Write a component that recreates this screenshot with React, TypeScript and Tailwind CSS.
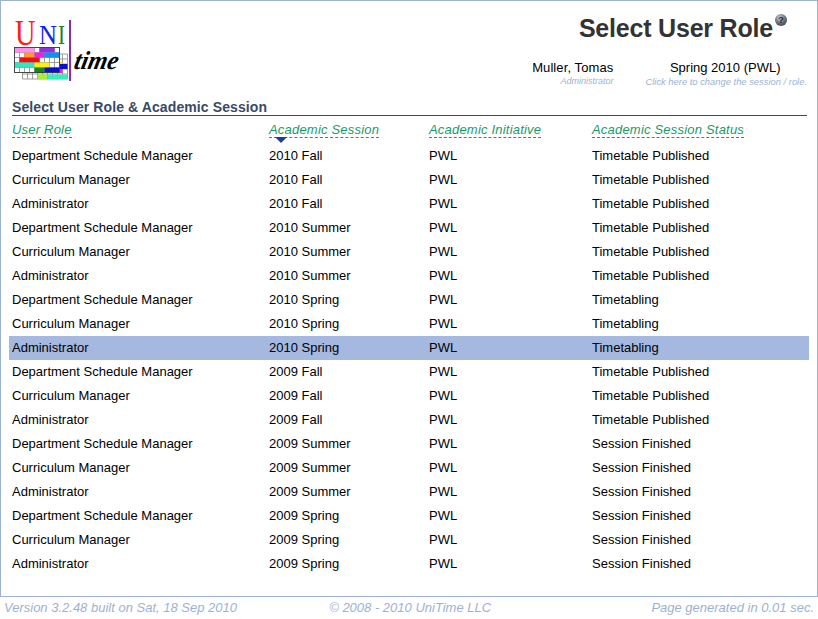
import React from 'react';

const sessions = [
  ['2010 Fall', 'Timetable Published'],
  ['2010 Summer', 'Timetable Published'],
  ['2010 Spring', 'Timetabling'],
  ['2009 Fall', 'Timetable Published'],
  ['2009 Summer', 'Session Finished'],
  ['2009 Spring', 'Session Finished'],
];

const roles = ['Department Schedule Manager', 'Curriculum Manager', 'Administrator'];

const rows = sessions.flatMap(([session, status]) =>
  roles.map((role) => ({ role, session, status }))
);

const gridLines = (x: number, y: number, cols: number, rowCount: number) => {
  const lines = [];
  for (let i = 0; i <= cols; i++) {
    lines.push(<line key={`c${i}`} x1={x + i * 5} y1={y} x2={x + i * 5} y2={y + rowCount * 5} stroke="#888" strokeWidth="0.8" />);
  }
  for (let i = 0; i <= rowCount; i++) {
    lines.push(<line key={`r${i}`} x1={x} y1={y + i * 5} x2={x + cols * 5} y2={y + i * 5} stroke="#888" strokeWidth="0.8" />);
  }
  return lines;
};

function Logo() {
  return (
    <svg width="112" height="74" viewBox="12 10 112 74" className="block">
      <text x="15" y="45" fontFamily="Liberation Serif" fontSize="35" fill="#ff2010" textLength="20.5" lengthAdjust="spacingAndGlyphs">U</text>
      <text x="39" y="44" fontFamily="Liberation Serif" fontSize="27" fill="#1020f0" textLength="18" lengthAdjust="spacingAndGlyphs">N</text>
      <text x="58" y="44" fontFamily="Liberation Serif" fontSize="27" fill="#208020" textLength="7" lengthAdjust="spacingAndGlyphs">I</text>
      <rect x="69" y="20" width="2" height="61" fill="#8a2fa8" />
      {/* back grid */}
      <rect x="22" y="54" width="46" height="25" fill="#fff" />
      {gridLines(22.5, 54, 9, 5)}
      <rect x="60" y="62" width="2.5" height="5" fill="#ffee00" />
      <rect x="60" y="64" width="7.5" height="5" fill="#0a10d0" />
      <rect x="60" y="69" width="2.5" height="4" fill="#ee22cc" />
      <rect x="37.5" y="74.5" width="9.5" height="4.5" fill="#a4f030" />
      <rect x="47.5" y="74.5" width="20" height="4.5" fill="#30f0c0" />
      {/* front grid */}
      <rect x="14" y="47" width="46" height="25.5" fill="#fff" />
      {gridLines(14.5, 47.5, 9, 5)}
      <rect x="14.5" y="47.5" width="20" height="5" fill="#ff90f0" />
      <rect x="39.5" y="47.5" width="15" height="5" fill="#9030e0" />
      <rect x="24.5" y="52.5" width="10" height="5" fill="#ff9a30" />
      <rect x="34.5" y="52.5" width="10" height="5" fill="#f020e0" />
      <rect x="44.5" y="52.5" width="15" height="5" fill="#1090f0" />
      <rect x="19.5" y="57.5" width="20" height="5" fill="#f01010" />
      <rect x="14.5" y="62.5" width="20" height="5" fill="#30e8c0" />
      <rect x="34.5" y="62.5" width="15" height="5" fill="#ffee10" />
      <rect x="34.5" y="67.5" width="10" height="5" fill="#108a10" />
      <rect x="44.5" y="67.5" width="15" height="5" fill="#0a10d0" />
      <rect x="14.5" y="47.5" width="45" height="25" fill="none" stroke="#333" strokeWidth="0.8" />
      {/* slanted to get closer to the script wordmark */}
      <text transform="translate(73 69) skewX(-12)" fontFamily="Liberation Serif" fontStyle="italic" fontWeight="bold" fontSize="26" fill="#000" textLength="44" lengthAdjust="spacingAndGlyphs">time</text>
    </svg>
  );
}

function HelpIcon() {
  return (
    <svg width="14" height="14" viewBox="0 0 14 14" className="absolute top-[3px] left-[245px]">
      <defs>
        <radialGradient id="help" cx="40%" cy="30%" r="75%">
          <stop offset="0%" stopColor="#c4cbd6" />
          <stop offset="60%" stopColor="#68727f" />
          <stop offset="100%" stopColor="#3a424c" />
        </radialGradient>
      </defs>
      <circle cx="7" cy="7" r="6" fill="url(#help)" />
      <text x="7" y="10" textAnchor="middle" fontFamily="Liberation Sans" fontWeight="bold" fontSize="9" fill="#20262e">?</text>
    </svg>
  );
}

export default function App() {
  return (
    <div className="w-[818px] h-[619px] bg-white font-['Liberation_Sans',Arial,sans-serif] text-[13px] text-black overflow-hidden">
      <div className="h-[597px] border border-[#9db2d3] pt-[9px] px-[8px]">
        {/* header */}
        <div className="flex justify-between h-[74px] pl-[3px]">
          <Logo />
          <div className="relative w-[280px] pr-[2px] pt-[7px]">
            <div className="text-right text-[25px] leading-[22px] font-bold text-[#333] pr-[34px] tracking-[-0.2px]">Select User Role</div>
            <HelpIcon />
            <div className="flex mt-[21px] ml-[-2px]">
              <div className="w-[87px] text-right">
                <div className="leading-[15px] tracking-[0.1px] mb-[1px]">Muller, Tomas</div>
                <div className="text-[9px] leading-[11px] italic text-[#9db2d3]">Administrator</div>
              </div>
              <div className="w-[195px] text-right">
                <div className="leading-[15px] text-center pl-[30px] mb-[1px]">Spring 2010 (PWL)</div>
                <div className="text-[9.4px] leading-[11px] italic text-[#9db2d3]">Click here to change the session / role.</div>
              </div>
            </div>
          </div>
        </div>

        {/* section title */}
        <div className="ml-[3px] mt-[15px] mr-[2px] border-b border-[#3a4a66] text-[14px] leading-[16px] font-bold tracking-[0.1px] text-[#3a4a66]">
          Select User Role &amp; Academic Session
        </div>

        {/* table */}
        <table className="w-[800px] border-collapse table-fixed mt-[4px]">
          <colgroup>
            <col className="w-[257px]" />
            <col className="w-[160px]" />
            <col className="w-[163px]" />
            <col />
          </colgroup>
          <thead>
            <tr className="h-[24px]">
              {['User Role', 'Academic Session', 'Academic Initiative', 'Academic Session Status'].map((h) => (
                <th key={h} className="relative pl-[3px] text-left align-top font-normal">
                  <span className="inline-block italic text-[#1a9a6a] leading-[15px] tracking-[0.2px] border-b border-dashed border-[#1a9a6a]">{h}</span>
                  {h === 'Academic Session' && (
                    <span className="absolute left-[9px] top-[17px] w-0 h-0 border-x-[6px] border-x-transparent border-t-[6px] border-t-[#1c3f94]" />
                  )}
                </th>
              ))}
            </tr>
          </thead>
          <tbody>
            {rows.map((r, i) => (
              <tr key={i} className={`h-[24px] ${r.role === 'Administrator' && r.session === '2010 Spring' ? 'bg-[#a4b8e0]' : ''}`}>
                <td className="pl-[3px]">{r.role}</td>
                <td className="pl-[3px]">{r.session}</td>
                <td className="pl-[3px]">PWL</td>
                <td className="pl-[3px]">{r.status}</td>
              </tr>
            ))}
          </tbody>
        </table>
      </div>

      {/* footer */}
      <div className="flex justify-between px-[4px] pt-[3px] text-[13px] leading-[16px] italic text-[#9db2d3]">
        <span>Version 3.2.48 built on Sat, 18 Sep 2010</span>
        <span className="pr-[68px]">© 2008 - 2010 UniTime LLC</span>
        <span>Page generated in 0.01 sec.</span>
      </div>
    </div>
  );
}
